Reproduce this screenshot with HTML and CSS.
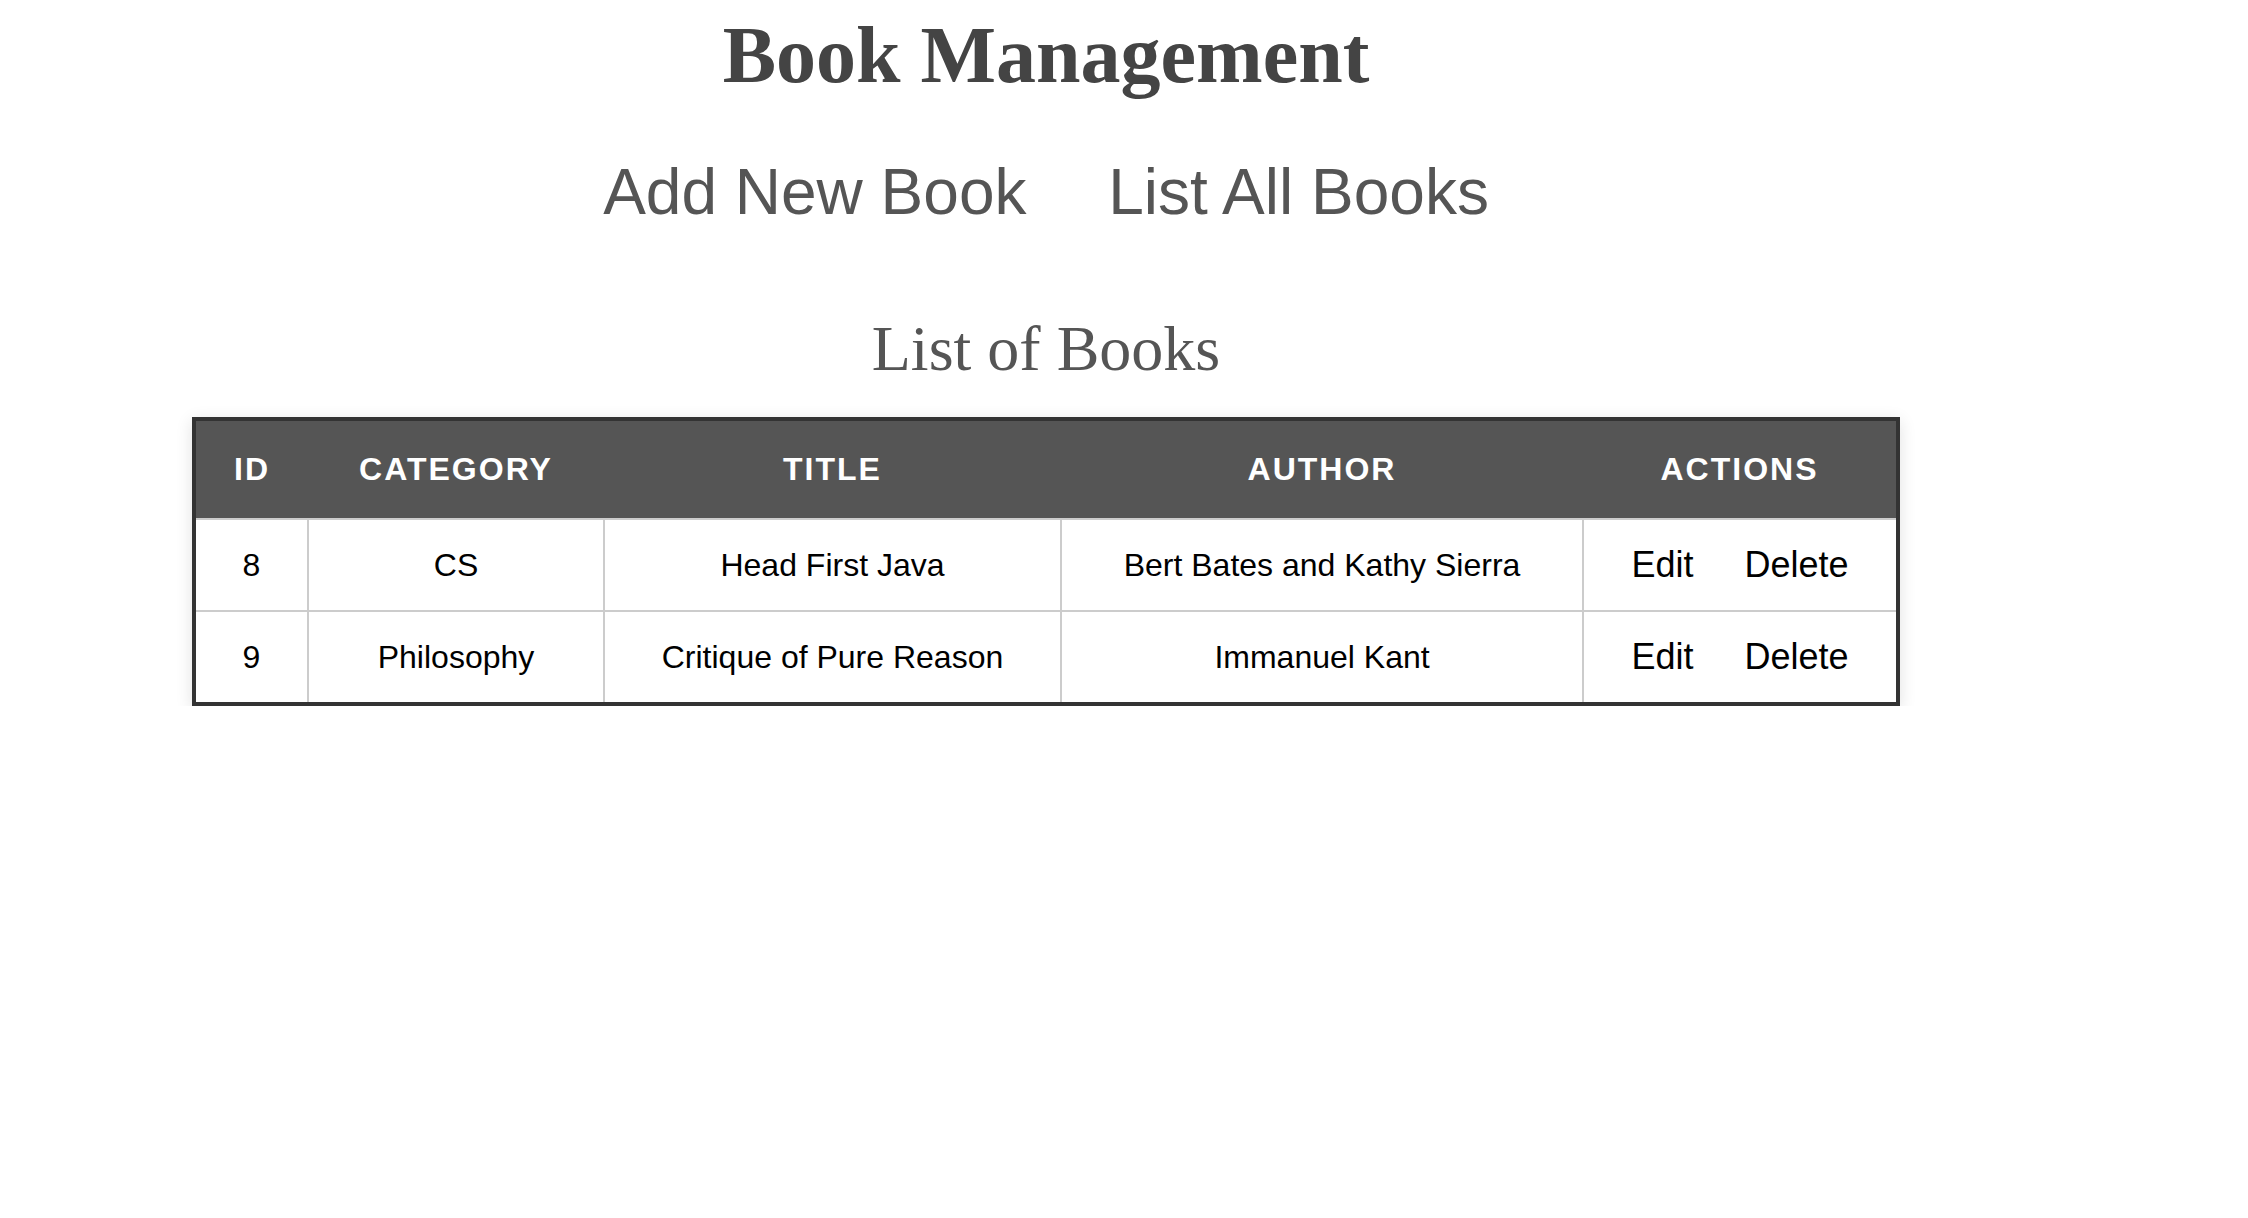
FILE: index.html
```html
<!DOCTYPE html>
<html lang="en">
<head>
<meta charset="utf-8">
<title>Book Management</title>
<link rel="stylesheet" href="styles.css">
</head>
<body>
<div class="page">
  <h1 class="title">Book Management</h1>
  <nav class="nav">
    <a class="nav-link" href="#">Add New Book</a>
    <a class="nav-link" href="#">List All Books</a>
  </nav>
  <h2 class="subtitle">List of Books</h2>
  <table class="books">
    <colgroup>
      <col class="c-id">
      <col class="c-cat">
      <col class="c-title">
      <col class="c-author">
      <col class="c-actions">
    </colgroup>
    <thead>
      <tr>
        <th>ID</th>
        <th>Category</th>
        <th>Title</th>
        <th>Author</th>
        <th>Actions</th>
      </tr>
    </thead>
    <tbody>
      <tr>
        <td>8</td>
        <td>CS</td>
        <td>Head First Java</td>
        <td>Bert Bates and Kathy Sierra</td>
        <td class="actions"><a class="act" href="#">Edit</a> <a class="act" href="#">Delete</a></td>
      </tr>
      <tr>
        <td>9</td>
        <td>Philosophy</td>
        <td>Critique of Pure Reason</td>
        <td>Immanuel Kant</td>
        <td class="actions"><a class="act" href="#">Edit</a> <a class="act" href="#">Delete</a></td>
      </tr>
    </tbody>
  </table>
</div>
</body>
</html>
```

FILE: styles.css
```css
html, body {
  margin: 0;
  padding: 0;
  background: #ffffff;
}

.page {
  width: 2092px;
  text-align: center;
  font-family: "Liberation Sans", Arial, sans-serif;
}

.title {
  margin: 9px 0 0;
  font-family: "Liberation Serif", "Times New Roman", serif;
  font-size: 80px;
  line-height: 92px;
  font-weight: bold;
  color: #444444;
}

.nav {
  margin-top: 54px;
  font-size: 64px;
  line-height: 74px;
}

.nav-link {
  margin: 0 32px;
  color: #555555;
  text-decoration: none;
}

.subtitle {
  margin: 83px 0 0;
  font-family: "Liberation Serif", "Times New Roman", serif;
  font-size: 64px;
  line-height: 74px;
  font-weight: normal;
  color: #555555;
}

.books {
  margin: 31px auto 0;
  width: 1704px;
  table-layout: fixed;
  border-collapse: collapse;
  border: 4px solid #333333;
  box-shadow: 0 4px 16px rgba(0, 0, 0, 0.12);
  font-size: 32px;
  color: #000000;
}

.c-id { width: 114px; }
.c-cat { width: 296px; }
.c-title { width: 457px; }
.c-author { width: 522px; }
.c-actions { width: 315px; }

.books th {
  background: #555555;
  color: #ffffff;
  font-weight: bold;
  text-transform: uppercase;
  letter-spacing: 2px;
  padding: 30px 20px;
  line-height: 37px;
  border: none;
}

.books td {
  padding: 24px 20px;
  line-height: 42px;
  border: 2px solid #cccccc;
  text-align: center;
  vertical-align: middle;
}

.books td.actions {
  padding: 23px 16px;
}

.act {
  font-size: 36px;
  padding: 0 21px;
  color: #000000;
  text-decoration: none;
}
```
